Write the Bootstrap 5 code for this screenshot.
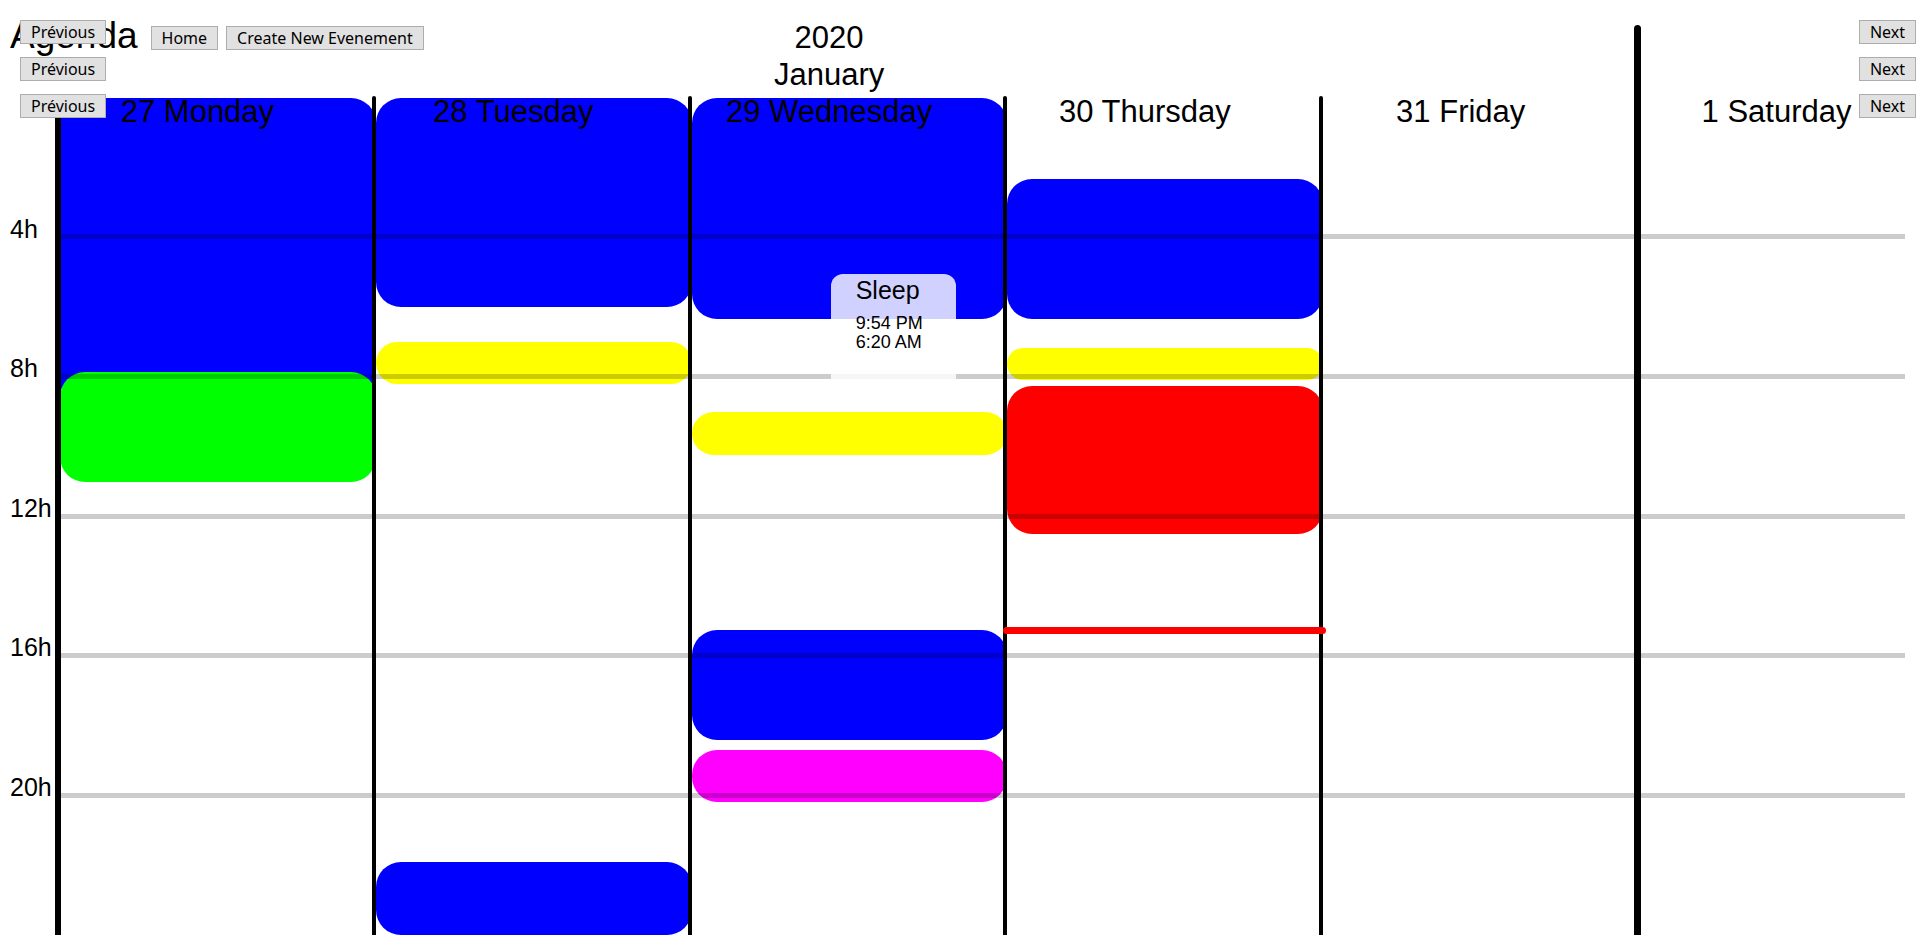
<!DOCTYPE html>
<html lang="en">
<head>
<meta charset="utf-8">
<meta name="viewport" content="width=device-width, initial-scale=1">
<title>Agenda</title>
<link href="https://cdn.jsdelivr.net/npm/bootstrap@5.3.0/dist/css/bootstrap.min.css" rel="stylesheet">
<style>
  :root { --gutter: 48px; --day: calc((100vw - 25px) / 6); }
  body { font-family: "Liberation Sans", Arial, sans-serif; color: #000; background: #fff; }

  /* One gutter for the hours, five full days and what is left of the sixth */
  .week-grid {
    display: grid;
    grid-template-columns: var(--gutter) repeat(5, var(--day)) minmax(0, 1fr);
    padding-left: 10px;
    padding-right: 15px;
  }
  .agenda-head { grid-template-rows: 37px 37px; padding-top: 19px; padding-bottom: 5px; }
  .toolbar { grid-column: 1 / 4; }
  .toolbar h1 { font-size: 37px; line-height: 34px; margin-right: 5px; }
  .period { grid-column: 4; font-size: 31px; line-height: 37px; padding-right: 37px; }

  .btn-agenda {
    --bs-btn-font-family: "Noto Sans", Tahoma, sans-serif;
    --bs-btn-font-size: 16px;
    --bs-btn-line-height: 22px;
    --bs-btn-padding-x: 10px;
    --bs-btn-padding-y: 0;
    --bs-btn-border-radius: 0;
    --bs-btn-color: #000;
    --bs-btn-bg: #e1e1e1;
    --bs-btn-border-color: #adadad;
    --bs-btn-hover-color: #000;
    --bs-btn-hover-bg: #e5f1fb;
    --bs-btn-hover-border-color: #0078d7;
  }
  .pager { top: 20px; gap: 13px; z-index: 5; }
  .pager-prev { left: 20px; }
  .pager-next { right: 4px; }

  .board { height: calc(100vh - 113px); min-height: 480px; }
  .hour { font-size: 25px; line-height: 18px; flex: 1 1 0; }

  .day-label {
    position: relative; z-index: 4;
    width: calc(var(--day) - 37px);
    font-size: 31px; line-height: 28px; font-weight: 400;
    margin: 0; text-align: center; white-space: nowrap;
  }
  .day::before {
    content: ""; position: absolute; z-index: 3;
    top: -2px; bottom: 0; left: -2px; width: 4px;
    background: #000; border-radius: 2px 2px 0 0;
  }
  .day-first::before { top: -4px; left: -3px; width: 6px; border-radius: 3px 3px 0 0; }
  .day-month::before { top: -73px; left: -3px; width: 7px; border-radius: 4px 4px 0 0; }

  /* --from, --len and --at are minutes of the day */
  .event {
    position: absolute; z-index: 1;
    left: 2px; width: 100%;
    top: calc(var(--from) / 1440 * 100%);
    height: calc(var(--len) / 1440 * 100%);
    border-radius: 25px;
  }
  .ev-sleep { background: #00f; }
  .ev-meal { background: #ff0; }
  .ev-sport { background: #0f0; }
  .ev-work { background: #f00; }
  .ev-fun { background: #f0f; }
  .hour-line {
    position: absolute; z-index: 2;
    left: 61px; right: 15px; height: 5px;
    top: calc(var(--at) / 1440 * 100% - 3px);
    background: rgba(0, 0, 0, .2);
  }
  .now-line {
    position: absolute; z-index: 4;
    left: -2px; right: -5px; height: 7px;
    top: calc(var(--at) / 1440 * 100% - 4px);
    background: #f00; border-radius: 4px;
  }
  .event-tip {
    position: absolute; z-index: 4;
    left: 141px; width: 125px; height: 120px;
    top: calc(303 / 1440 * 100%);
    padding: 4px 0 0 25px;
    border-radius: 12px;
    background: rgba(255, 255, 255, .82);
    font-size: 18px; line-height: 19px;
  }
  .event-tip h3 { font-size: 25px; line-height: 25px; margin: 0 0 11px; font-weight: 400; }
</style>
</head>
<body>
<div class="position-relative">

  <header class="week-grid agenda-head">
    <div class="toolbar d-flex align-items-center gap-2">
      <h1 class="fw-normal mb-0 align-self-start">Agenda</h1>
      <button type="button" class="btn btn-agenda">Home</button>
      <button type="button" class="btn btn-agenda">Create New Evenement</button>
    </div>
    <div class="period text-center">2020</div>
    <div class="period text-center">January</div>
  </header>

  <nav class="pager pager-prev position-absolute d-flex flex-column" aria-label="Back">
    <button type="button" class="btn btn-agenda">Prévious</button>
    <button type="button" class="btn btn-agenda">Prévious</button>
    <button type="button" class="btn btn-agenda">Prévious</button>
  </nav>
  <nav class="pager pager-next position-absolute d-flex flex-column" aria-label="Forward">
    <button type="button" class="btn btn-agenda">Next</button>
    <button type="button" class="btn btn-agenda">Next</button>
    <button type="button" class="btn btn-agenda">Next</button>
  </nav>

  <main class="board week-grid position-relative">
    <div class="d-flex flex-column">
      <div class="hour d-flex align-items-end">4h</div>
      <div class="hour d-flex align-items-end">8h</div>
      <div class="hour d-flex align-items-end">12h</div>
      <div class="hour d-flex align-items-end">16h</div>
      <div class="hour d-flex align-items-end">20h</div>
      <div class="hour"></div>
    </div>

    <section class="day day-first position-relative">
      <h2 class="day-label">27 Monday</h2>
      <div class="event ev-sleep" style="--from:0;--len:530"></div>
      <div class="event ev-sport" style="--from:472;--len:189"></div>
    </section>
    <section class="day position-relative">
      <h2 class="day-label">28 Tuesday</h2>
      <div class="event ev-sleep" style="--from:0;--len:360"></div>
      <div class="event ev-meal" style="--from:420;--len:72"></div>
      <div class="event ev-sleep" style="--from:1314;--len:126"></div>
    </section>
    <section class="day position-relative">
      <h2 class="day-label">29 Wednesday</h2>
      <div class="event ev-sleep" style="--from:0;--len:380"></div>
      <div class="event ev-meal" style="--from:540;--len:75"></div>
      <div class="event ev-sleep" style="--from:915;--len:190"></div>
      <div class="event ev-fun" style="--from:1122;--len:90"></div>
      <div class="event-tip" role="tooltip">
        <h3>Sleep</h3>
        <div>9:54 PM</div>
        <div>6:20 AM</div>
      </div>
    </section>
    <section class="day position-relative">
      <h2 class="day-label">30 Thursday</h2>
      <div class="event ev-sleep" style="--from:140;--len:240"></div>
      <div class="event ev-meal" style="--from:430;--len:55"></div>
      <div class="event ev-work" style="--from:495;--len:255"></div>
      <div class="now-line" style="--at:917"></div>
    </section>
    <section class="day position-relative">
      <h2 class="day-label">31 Friday</h2>
    </section>
    <section class="day day-month position-relative">
      <h2 class="day-label">1 Saturday</h2>
    </section>

    <div class="hour-line" style="--at:240"></div>
    <div class="hour-line" style="--at:480"></div>
    <div class="hour-line" style="--at:720"></div>
    <div class="hour-line" style="--at:960"></div>
    <div class="hour-line" style="--at:1200"></div>
  </main>
</div>
<script src="https://cdn.jsdelivr.net/npm/bootstrap@5.3.0/dist/js/bootstrap.bundle.min.js"></script>
</body>
</html>
